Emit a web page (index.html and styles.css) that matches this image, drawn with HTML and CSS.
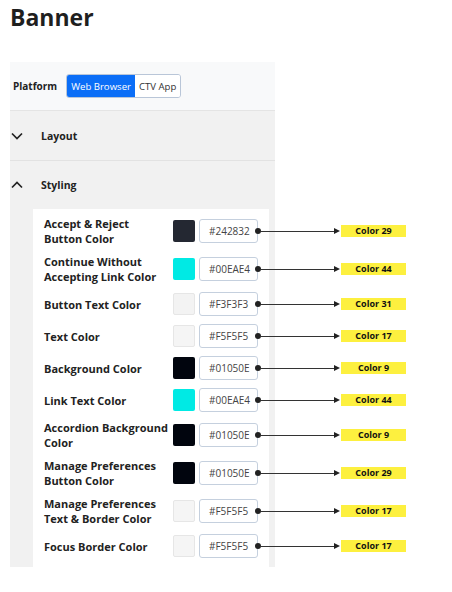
FILE: index.html
```html
<!DOCTYPE html>
<html>
<head>
<meta charset="utf-8">
<link rel="stylesheet" href="styles.css">
</head>
<body>
<h1 class="title">Banner</h1>
<div class="panel">
  <div class="platform">
    <span class="platform-label">Platform</span>
    <div class="toggle">
      <span class="seg seg-active">Web Browser</span>
      <span class="seg">CTV App</span>
    </div>
  </div>
  <div class="acc-header">
    <svg class="chev" width="12" height="8" viewBox="0 0 12 8"><polyline points="1,1.5 6,6.5 11,1.5" fill="none" stroke="#222" stroke-width="1.7"/></svg>
    <span class="acc-title">Layout</span>
  </div>
  <div class="acc-header acc-open">
    <svg class="chev" width="12" height="8" viewBox="0 0 12 8"><polyline points="1,6.5 6,1.5 11,6.5" fill="none" stroke="#222" stroke-width="1.7"/></svg>
    <span class="acc-title">Styling</span>
  </div>
  <div class="acc-body">
    <div class="fields">
      <div class="row"><div class="label">Accept &amp; Reject Button Color</div><span class="swatch" style="background:#242832"></span><span class="hex">#242832</span><span class="note"><span class="dot"></span><span class="line"></span><span class="head"></span><span class="tag">Color 29</span></span></div>
      <div class="row"><div class="label">Continue Without Accepting Link Color</div><span class="swatch" style="background:#00EAE4"></span><span class="hex">#00EAE4</span><span class="note"><span class="dot"></span><span class="line"></span><span class="head"></span><span class="tag">Color 44</span></span></div>
      <div class="row"><div class="label">Button Text Color</div><span class="swatch swatch-light" style="background:#F3F3F3"></span><span class="hex">#F3F3F3</span><span class="note"><span class="dot"></span><span class="line"></span><span class="head"></span><span class="tag">Color 31</span></span></div>
      <div class="row"><div class="label">Text Color</div><span class="swatch swatch-light" style="background:#F5F5F5"></span><span class="hex">#F5F5F5</span><span class="note"><span class="dot"></span><span class="line"></span><span class="head"></span><span class="tag">Color 17</span></span></div>
      <div class="row"><div class="label">Background Color</div><span class="swatch" style="background:#01050E"></span><span class="hex">#01050E</span><span class="note"><span class="dot"></span><span class="line"></span><span class="head"></span><span class="tag">Color 9</span></span></div>
      <div class="row"><div class="label">Link Text Color</div><span class="swatch" style="background:#00EAE4"></span><span class="hex">#00EAE4</span><span class="note"><span class="dot"></span><span class="line"></span><span class="head"></span><span class="tag">Color 44</span></span></div>
      <div class="row"><div class="label">Accordion Background Color</div><span class="swatch" style="background:#01050E"></span><span class="hex">#01050E</span><span class="note"><span class="dot"></span><span class="line"></span><span class="head"></span><span class="tag">Color 9</span></span></div>
      <div class="row"><div class="label">Manage Preferences Button Color</div><span class="swatch" style="background:#01050E"></span><span class="hex">#01050E</span><span class="note"><span class="dot"></span><span class="line"></span><span class="head"></span><span class="tag">Color 29</span></span></div>
      <div class="row"><div class="label">Manage Preferences Text &amp; Border Color</div><span class="swatch swatch-light" style="background:#F5F5F5"></span><span class="hex">#F5F5F5</span><span class="note"><span class="dot"></span><span class="line"></span><span class="head"></span><span class="tag">Color 17</span></span></div>
      <div class="row"><div class="label">Focus Border Color</div><span class="swatch swatch-light" style="background:#F5F5F5"></span><span class="hex">#F5F5F5</span><span class="note"><span class="dot"></span><span class="line"></span><span class="head"></span><span class="tag">Color 17</span></span></div>
    </div>
  </div>
</div>
</body>
</html>
```
FILE: styles.css
```css
* { box-sizing: border-box; }
body {
  margin: 0;
  background: #fff;
  font-family: "Open Sans", "Noto Sans", sans-serif;
  color: #222;
}
.title {
  margin: 0;
  padding: 2px 0 0 10px;
  font-size: 23px;
  line-height: 30px;
  font-weight: 700;
  color: #1f1f1f;
}
.panel {
  margin: 30px 0 0 10px;
  width: 265px;
  background: #f1f1f1;
}
.platform {
  height: 49px;
  background: #f8f9fa;
  border-bottom: 1px solid #e4e4e4;
  display: flex;
  align-items: center;
  padding-left: 3px;
  gap: 9px;
}
.platform-label {
  font-size: 10px;
  font-weight: 700;
  color: #222;
}
.toggle {
  display: flex;
  height: 24px;
  border: 1px solid #b9c6d8;
  border-radius: 3px;
  overflow: hidden;
}
.seg {
  display: flex;
  align-items: center;
  padding: 0 4px;
  font-size: 9.6px;
  color: #333;
  background: #fff;
}
.seg-active {
  background: #0b6ef7;
  color: #fff;
}
.acc-header {
  height: 50px;
  border-bottom: 1px solid #e2e2e2;
  display: flex;
  align-items: center;
  padding-left: 1px;
}
.acc-open {
  height: 48px;
  border-bottom: none;
}
.chev {
  display: block;
  width: 12px;
  margin-right: 18px;
}
.acc-title {
  font-size: 10.5px;
  font-weight: 700;
  color: #222;
}
.acc-body {
  padding: 0 6px 0 23px;
}
.fields {
  background: #fff;
  padding: 7px 0 9px 11px;
  display: flex;
  flex-direction: column;
  gap: 8px;
}
.row {
  display: flex;
  align-items: center;
  min-height: 24px;
}
.label {
  width: 129px;
  flex: none;
  font-size: 11px;
  line-height: 15px;
  font-weight: 700;
  color: #222;
  padding-right: 4px;
}
.swatch {
  flex: none;
  width: 22px;
  height: 22px;
  border-radius: 2px;
}
.swatch-light {
  border: 1px solid #e6e6e6;
}
.hex {
  flex: none;
  margin-left: 4px;
  width: 59px;
  height: 24px;
  border: 1px solid #c5d0de;
  border-radius: 3px;
  font-size: 10px;
  color: #444;
  display: flex;
  align-items: center;
  padding-left: 9px;
}
.note {
  flex: none;
  display: flex;
  align-items: center;
  margin-left: -3px;
}
.dot {
  width: 6px;
  height: 6px;
  border-radius: 50%;
  background: #222;
}
.line {
  width: 73px;
  height: 1px;
  background: #333;
}
.head {
  width: 0;
  height: 0;
  border-top: 3.5px solid transparent;
  border-bottom: 3.5px solid transparent;
  border-left: 6px solid #222;
}
.tag {
  margin-left: 1px;
  width: 65px;
  height: 12px;
  background: #fdf03f;
  font-size: 9px;
  font-weight: 700;
  color: #111;
  display: flex;
  align-items: center;
  justify-content: center;
  line-height: 12px;
}
```
